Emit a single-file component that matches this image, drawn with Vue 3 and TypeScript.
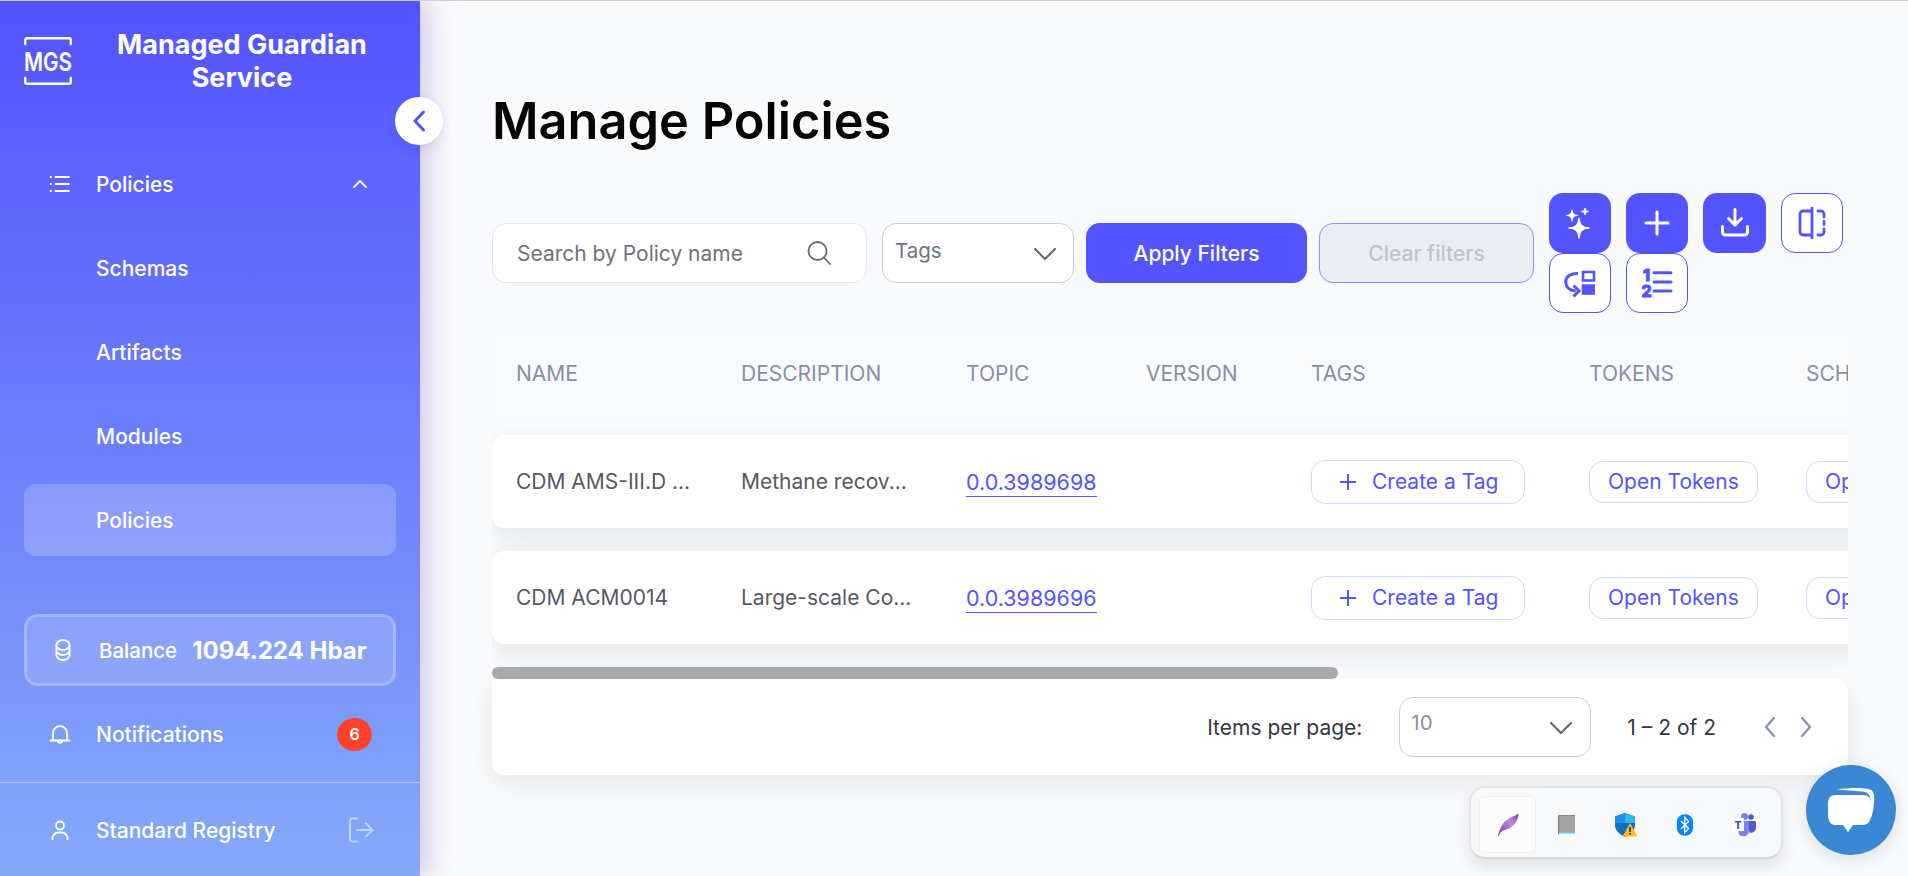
<script setup lang="ts">
interface Row { name: string; desc: string; topic: string }
const rows: Row[] = [
  { name: 'CDM AMS-III.D ...', desc: 'Methane recov...', topic: '0.0.3989698' },
  { name: 'CDM ACM0014', desc: 'Large-scale Co...', topic: '0.0.3989696' },
]
const headers: string[] = ['NAME', 'DESCRIPTION', 'TOPIC', 'VERSION', 'TAGS', 'TOKENS', 'SCHEMAS']
const subItems: string[] = ['Schemas', 'Artifacts', 'Modules']
</script>

<template>
  <div class="app">
    <aside class="sidebar">
      <header class="brand">
        <svg class="logo" viewBox="0 0 48 48" width="48" height="48" fill="none">
          <path d="M1.200 7V3.200a2 2 0 0 1 2-2h41.600a2 2 0 0 1 2 2V7M1.200 41v3.800a2 2 0 0 0 2 2h41.600a2 2 0 0 0 2-2V41" stroke="#fff" stroke-width="2.400" stroke-linecap="round"/>
          <text x="0" y="34" textLength="48" lengthAdjust="spacingAndGlyphs" fill="#fff" font-family="Inter, sans-serif" font-weight="600" font-size="26">MGS</text>
        </svg>
        <div class="brand-name">Managed Guardian Service</div>
      </header>

      <nav class="nav">
        <div class="nav-item">
          <svg class="nav-icon" viewBox="0 0 24 24" width="24" height="24" fill="none" stroke="#fff" stroke-width="1.800" stroke-linecap="round">
            <path d="M7.500 5h13.500M7.500 12h13.500M7.500 19h13.500M2.500 5h.6M2.500 12h.6M2.500 19h.6"/>
          </svg>
          <span>Policies</span>
          <svg class="caret" viewBox="0 0 16 10" width="16" height="10" fill="none" stroke="#fff" stroke-width="1.800" stroke-linecap="round" stroke-linejoin="round">
            <path d="M2 8l6-6 6 6"/>
          </svg>
        </div>
        <div v-for="item in subItems" :key="item" class="nav-item">
          <span class="nav-spacer"></span><span>{{ item }}</span>
        </div>
        <div class="nav-item active">
          <span class="nav-spacer"></span><span>Policies</span>
        </div>
      </nav>

      <div class="balance">
        <svg viewBox="0 0 24 24" width="24" height="24" fill="none" stroke="#fff" stroke-width="1.800">
          <ellipse cx="12" cy="7" rx="6.600" ry="5"/>
          <path d="M5.400 7v10c0 2.800 3 5 6.600 5s6.600-2.200 6.600-5V7M5.400 12c0 2.800 3 5 6.600 5s6.600-2.200 6.600-5"/>
        </svg>
        <span class="balance-label">Balance</span>
        <span class="balance-value">1094.224 Hbar</span>
      </div>

      <div class="nav-item notif">
        <svg class="nav-icon" viewBox="0 0 24 24" width="24" height="24" fill="none" stroke="#fff" stroke-width="1.800" stroke-linecap="round" stroke-linejoin="round">
          <path d="M2.500 18.500h19M5 18.500v-7.500a7 7 0 0 1 14 0v7.500M9.500 19a2.600 2.600 0 0 0 5 0"/>
        </svg>
        <span>Notifications</span>
        <span class="badge">6</span>
      </div>

      <footer class="user">
        <div class="nav-item">
          <svg class="nav-icon" viewBox="0 0 24 24" width="24" height="24" fill="none" stroke="#fff" stroke-width="1.800">
            <circle cx="12" cy="7.500" r="4"/>
            <path d="M4.500 22v-1.500a6 6 0 0 1 6-6h3a6 6 0 0 1 6 6V22"/>
          </svg>
          <span>Standard Registry</span>
          <svg class="logout" viewBox="0 0 26 26" width="26" height="26" fill="none" stroke="#c3d4fb" stroke-width="2" stroke-linecap="round" stroke-linejoin="round">
            <path d="M9 1.500H4a2 2 0 0 0-2 2v19a2 2 0 0 0 2 2h5M9 13h15.500M18 6.500l6.500 6.500-6.500 6.500"/>
          </svg>
        </div>
      </footer>
    </aside>

    <main class="main">
      <h1 class="title">Manage Policies</h1>

      <section class="toolbar">
        <div class="search">
          <span>Search by Policy name</span>
          <svg viewBox="0 0 26 26" width="26" height="26" fill="none" stroke="#646b75" stroke-width="1.800" stroke-linecap="round">
            <circle cx="11.500" cy="11" r="9"/><path d="M18 17.500l6 6.500"/>
          </svg>
        </div>
        <div class="select tags">
          <span>Tags</span>
          <svg viewBox="0 0 24 14" width="24" height="14" fill="none" stroke="#646b75" stroke-width="2.200" stroke-linecap="round" stroke-linejoin="round"><path d="M2 2l10 10L22 2"/></svg>
        </div>
        <button class="apply">Apply Filters</button>
        <button class="clear">Clear filters</button>

        <div class="actions">
          <button class="act solid">
            <svg viewBox="0 0 32 32" width="32" height="32" fill="#fff">
              <path d="M15 11.500Q15 21 25 21Q15 21 15 31Q15 21 5 21Q15 21 15 11.500Z" stroke="#fff" stroke-width="1.600" stroke-linejoin="round"/>
              <path d="M8 3Q8 8.500 13.500 8.500Q8 8.500 8 14Q8 8.500 2.500 8.500Q8 8.500 8 3Z" stroke="#fff" stroke-width="1.200" stroke-linejoin="round"/>
              <path d="M21 1Q21 4.500 24.500 4.500Q21 4.500 21 8Q21 4.500 17.500 4.500Q21 4.500 21 1Z" stroke="#fff" stroke-width=".9" stroke-linejoin="round"/>
            </svg>
          </button>
          <button class="act solid">
            <svg viewBox="0 0 32 32" width="32" height="32" fill="none" stroke="#fff" stroke-width="3" stroke-linecap="round"><path d="M16 5v22M5 16h22"/></svg>
          </button>
          <button class="act solid wide">
            <svg viewBox="0 0 32 32" width="32" height="32" fill="none" stroke="#fff" stroke-width="3" stroke-linecap="round" stroke-linejoin="round">
              <path d="M16 2.500V18M9.500 11.500L16 18l6.500-6.500M3.500 19.500V25a3 3 0 0 0 3 3h19a3 3 0 0 0 3-3v-5.500"/>
            </svg>
          </button>
          <button class="act outline">
            <svg viewBox="0 0 32 32" width="32" height="32" fill="none" stroke="#5454ff" stroke-width="2.800" stroke-linecap="round" stroke-linejoin="round">
              <path d="M16 4H7a3 3 0 0 0-3 3v18a3 3 0 0 0 3 3h9M16 1v30M22 4h3a3 3 0 0 1 3 3v3M28 14.500v3M28 22v3a3 3 0 0 1-3 3h-3"/>
            </svg>
          </button>
          <button class="act outline">
            <svg viewBox="0 0 32 32" width="32" height="32" fill="none" stroke="#5454ff">
              <rect x="19" y="5" width="11" height="8.500" stroke-width="2.600"/>
              <rect x="17.700" y="17.300" width="13.300" height="10.500" fill="#5454ff" stroke="none"/>
              <path d="M14 6.500C7 6 1.700 9.500 1.700 15c0 4.500 3 8.500 10 9" stroke-width="3"/>
              <path d="M9.500 18.500l5.500 5.500-5.500 5.500" stroke-width="3"/>
            </svg>
          </button>
          <button class="act outline">
            <svg viewBox="0 0 32 32" width="32" height="32" fill="none" stroke="#5454ff" stroke-width="3" stroke-linecap="round">
              <path d="M13 5.700h17M13 15h17M13 24h17"/>
              <text x="5.500" y="14" text-anchor="middle" fill="#5454ff" stroke="#5454ff" stroke-width=".9" font-family="Inter, sans-serif" font-weight="800" font-size="16">1</text>
              <text x="5.500" y="29.500" text-anchor="middle" fill="#5454ff" stroke="#5454ff" stroke-width=".9" font-family="Inter, sans-serif" font-weight="800" font-size="16">2</text>
            </svg>
          </button>
        </div>
      </section>

      <section class="table">
        <div class="grid thead">
          <div v-for="h in headers" :key="h">{{ h }}</div>
        </div>
        <div v-for="row in rows" :key="row.topic" class="grid trow">
          <div>{{ row.name }}</div>
          <div>{{ row.desc }}</div>
          <div><a class="topic">{{ row.topic }}</a></div>
          <div></div>
          <div>
            <button class="pill tag">
              <svg viewBox="0 0 16 16" width="16" height="16" fill="none" stroke="#5454ff" stroke-width="2"><path d="M8 0v16M0 8h16"/></svg>
              <span>Create a Tag</span>
            </button>
          </div>
          <div><button class="pill">Open Tokens</button></div>
          <div><button class="pill">Open Schemas</button></div>
        </div>
        <div class="scroll-track"><div class="scroll-thumb"></div></div>
      </section>

      <section class="paginator">
        <span>Items per page:</span>
        <div class="select size">
          <span>10</span>
          <svg viewBox="0 0 24 14" width="24" height="14" fill="none" stroke="#646b75" stroke-width="2.200" stroke-linecap="round" stroke-linejoin="round"><path d="M2 2l10 10L22 2"/></svg>
        </div>
        <span class="range">1 – 2 of 2</span>
        <div class="pager">
          <svg viewBox="0 0 14 22" width="14" height="22" fill="none" stroke="#8892ac" stroke-width="2.400" stroke-linecap="round" stroke-linejoin="round"><path d="M11 2L3 11l8 9"/></svg>
          <svg viewBox="0 0 14 22" width="14" height="22" fill="none" stroke="#8892ac" stroke-width="2.400" stroke-linecap="round" stroke-linejoin="round"><path d="M3 2l8 9-8 9"/></svg>
        </div>
      </section>
    </main>

    <button class="collapse" aria-label="Collapse">
      <svg viewBox="0 0 14 24" width="14" height="24" fill="none" stroke="#5454ff" stroke-width="3" stroke-linecap="round" stroke-linejoin="round"><path d="M11.500 3L3 12l8.500 9"/></svg>
    </button>

    <div class="tray">
      <div class="tray-cell first">
        <svg viewBox="0 0 22 24" width="22" height="24">
          <defs><linearGradient id="fe" x1="0" y1="1" x2="1" y2="0"><stop offset="0" stop-color="#7a35a8"/><stop offset=".6" stop-color="#b890da"/><stop offset="1" stop-color="#7d3fb0"/></linearGradient></defs>
          <path d="M1 23.500C2 18 4 12 9 7.500C13 4 18 3 21.500 .5C21.500 6 18 12 13 15C9 17 5 17 3 20.500L1.500 23.500Z" fill="url(#fe)"/>
        </svg>
      </div>
      <div class="tray-cell">
        <svg viewBox="0 0 18 20" width="18" height="20">
          <rect x="0" y="0" width="17" height="18" fill="#a3a3a3"/>
          <path d="M0 0h1v19H0z" fill="#7b7b7b"/><path d="M0 0h17v1H0z" fill="#8a8a8a"/><path d="M1 17h16v1.500H1z" fill="#74c0ec"/>
        </svg>
      </div>
      <div class="tray-cell">
        <svg viewBox="0 0 24 26" width="24" height="26">
          <path d="M11 1l10 3.500V13c0 6-5 9.500-10 12C6 22.500 1 19 1 13V4.500z" fill="#0f6cc4"/>
          <path d="M11 1l10 3.500V11H11z" fill="#31b7ec"/><path d="M11 1v10H1V4.500z" fill="#1d93dd"/>
          <path d="M16 11l7.500 13.500h-15z" fill="#fdbd13"/>
          <rect x="15.300" y="15" width="1.500" height="5" fill="#222"/><rect x="15.300" y="21" width="1.500" height="1.600" fill="#222"/>
        </svg>
      </div>
      <div class="tray-cell">
        <svg viewBox="0 0 20 26" width="18" height="24">
          <rect x="1" y="1" width="18" height="24" rx="8.500" fill="#0a84ff"/>
          <path d="M5.500 8.500L14 17l-4.300 4.500v-17L14 9l-8.500 8.500" fill="none" stroke="#fff" stroke-width="1.500"/>
        </svg>
      </div>
      <div class="tray-cell">
        <svg viewBox="0 0 26 24" width="26" height="24">
          <circle cx="19" cy="4" r="2.800" fill="#5059c9"/>
          <path d="M15 8h7.500a1.500 1.500 0 0 1 1.500 1.500V15a5 5 0 0 1-6.500 4.500z" fill="#5059c9"/>
          <circle cx="12.500" cy="3.500" r="3.500" fill="#7b83eb"/>
          <path d="M7 8h10v10a5.500 5.500 0 0 1-10.500 2z" fill="#7b83eb"/>
          <rect x="0" y="5" width="12" height="13" fill="#fff"/>
          <text x="6" y="15.500" text-anchor="middle" fill="#4b53bc" font-family="Inter, sans-serif" font-weight="800" font-size="11">T</text>
        </svg>
      </div>
    </div>

    <button class="chat" aria-label="Chat">
      <svg viewBox="0 0 90 90" width="90" height="90" fill="#fff">
        <path d="M31 24.500C45 22.500 58 22.500 64 24.500C68.500 26 68.500 32 68 38C67.700 43 66.500 49 65 53L64.500 36C64.500 30 62 27 56 26.500Z"/>
        <path d="M29 30H57C62 30 65 33 65 38V50C65 56 62 60 57 60H47L42 67L37 60H29C25 60 22 56 22 50V38C22 33 25 30 29 30Z"/>
      </svg>
    </button>
  </div>
</template>

<style>
html, body { margin: 0; overflow: hidden; }
</style>

<style scoped>
.app {
  position: relative;
  display: flex;
  width: 1908px;
  height: 876px;
  box-sizing: border-box;
  border-top: 1px solid #cfcfcf;
  background: #f9fafc;
  font-family: Inter, "Noto Sans", sans-serif;
  overflow: hidden;
}
button { font-family: inherit; cursor: pointer; }

.sidebar {
  position: relative;
  z-index: 1;
  flex: 0 0 420px;
  display: flex;
  flex-direction: column;
  color: #fff;
  background: linear-gradient(180deg, #5353ff 0%, #85aaf9 100%);
  box-shadow: 6px 0 26px rgba(90, 50, 170, 0.28);
}
.brand {
  height: 147px;
  flex: none;
  display: flex;
  align-items: flex-start;
  padding: 27px 24px 0;
  box-sizing: border-box;
}
.logo { margin-top: 9px; flex: none; }
.brand-name {
  margin-left: 32px;
  width: 276px;
  text-align: center;
  font-size: 27px;
  font-weight: 700;
  line-height: 33px;
}
.nav { display: flex; flex-direction: column; gap: 12px; margin: 0 24px; }
.nav-item {
  height: 72px;
  display: flex;
  align-items: center;
  border-radius: 12px;
  font-size: 21px;
  font-weight: 500;
  color: #fff;
}
.nav-icon { flex: none; margin-left: 24px; margin-right: 24px; }
.nav-spacer { width: 72px; flex: none; }
.caret { margin-left: auto; margin-right: 28px; }
.active { background: rgba(255, 255, 255, 0.2); }
.balance {
  margin: 58px 24px 0;
  height: 72px;
  box-sizing: border-box;
  display: flex;
  align-items: center;
  padding-left: 24px;
  border: 3px solid rgba(255, 255, 255, 0.2);
  border-radius: 14px;
  background: rgba(255, 255, 255, 0.15);
}
.balance-label { margin-left: 24px; font-size: 20.500px; font-weight: 500; }
.balance-value { margin-left: 15px; font-size: 24px; font-weight: 700; white-space: nowrap; }
.notif { margin: 12px 24px 12px; }
.badge {
  margin-left: auto;
  margin-right: 24px;
  width: 35px;
  height: 33px;
  border-radius: 50%;
  background: #ff4229;
  display: flex;
  align-items: center;
  justify-content: center;
  font-size: 16px;
  font-weight: 600;
}
.user {
  border-top: 1px solid rgba(255, 255, 255, 0.35);
  flex: 1;
  padding: 11px 24px 0;
}
.logout { margin-left: auto; margin-right: 22px; }

.main {
  flex: 1;
  min-width: 0;
  padding: 0 60px 0 72px;
  display: flex;
  flex-direction: column;
}
.title {
  margin: 88px 0 0;
  height: 64px;
  line-height: 64px;
  font-size: 50.500px;
  font-weight: 600;
  color: #050505;
}
.toolbar {
  margin-top: 40px;
  height: 120px;
  display: flex;
  align-items: center;
  flex: none;
}
.toolbar > * { flex: none; }
.search {
  width: 375px;
  height: 60px;
  box-sizing: border-box;
  display: flex;
  align-items: center;
  justify-content: space-between;
  padding: 0 34px 0 24px;
  background: #fff;
  border: 1px solid #e3e7ef;
  border-radius: 14px;
  font-size: 21px;
  color: #6d747e;
}
.select {
  box-sizing: border-box;
  height: 60px;
  background: #fff;
  border: 1px solid #c9ced8;
  border-radius: 14px;
  display: flex;
  justify-content: space-between;
  color: #6d747e;
  font-size: 20.500px;
}
.select span { margin-top: 14px; }
.select svg { margin-top: 23px; }
.tags { width: 192px; margin-left: 15px; padding: 0 16px 0 12px; }
.apply, .clear {
  height: 60px;
  box-sizing: border-box;
  border-radius: 14px;
  font-size: 21px;
  font-weight: 500;
}
.apply { width: 221px; margin-left: 12px; background: #5454ff; border: 0; color: #fff; }
.clear { width: 215px; margin-left: 12px; background: #ebedf3; border: 1px solid #8f8fff; color: #bec3d1; }
.actions {
  margin-left: 15px;
  width: 299px;
  display: flex;
  flex-wrap: wrap;
  column-gap: 15px;
}
.act {
  width: 62px;
  height: 60px;
  box-sizing: border-box;
  border-radius: 14px;
  padding: 0;
  display: flex;
  align-items: center;
  justify-content: center;
}
.wide { width: 63px; }
.solid { background: #5454ff; border: 0; }
.outline { background: #fff; border: 1px solid #5454ff; }

.table {
  margin-top: 22px;
  height: 344px;
  flex: none;
  overflow: hidden;
  position: relative;
  display: flex;
  flex-direction: column;
}
.grid {
  display: grid;
  grid-template-columns: 225px 225px 180px 165px 278px 217px 300px;
  padding-left: 24px;
  width: 1460px;
  flex: none;
  align-items: center;
}
.thead {
  height: 100px;
  padding-bottom: 24px;
  box-sizing: border-box;
  font-size: 21px;
  color: #8690a9;
  background: #fafbfd;
}
.trow {
  height: 93px;
  background: #fff;
  border-radius: 12px 0 0 12px;
  box-shadow: 0 8px 30px rgba(0, 0, 0, 0.09);
  font-size: 21px;
  color: #555a63;
  margin-bottom: 23px;
}
.topic { color: #5454ff; border-bottom: 1px solid #5454ff; padding-bottom: 1px; font-size: 21.500px; }
.pill {
  height: 42px;
  box-sizing: border-box;
  padding: 0 18px;
  background: #fff;
  border: 1px solid #cfdbff;
  border-radius: 14px;
  color: #5454ff;
  font-size: 21px;
  font-weight: 400;
  white-space: nowrap;
}
.tag {
  height: 44px;
  width: 214px;
  display: flex;
  align-items: center;
  gap: 16px;
  padding-left: 28px;
}
.scroll-track { position: absolute; left: 0; right: 0; bottom: 0; height: 12px; background: #f7f8fa; }
.scroll-thumb { width: 846px; height: 12px; border-radius: 6px; background: #a9aaad; }

.paginator {
  height: 96px;
  flex: none;
  display: flex;
  align-items: center;
  justify-content: flex-end;
  background: #fff;
  border-radius: 0 12px 12px 12px;
  box-shadow: 0 8px 30px rgba(0, 0, 0, 0.08);
  font-size: 21px;
  color: #33383f;
  padding-right: 35px;
}
.size { width: 192px; margin-left: 37px; padding: 0 17px 0 11px; color: #8a929f; }
.size span { margin-top: 12px; }
.range { margin-left: 36px; }
.pager { margin-left: 47px; display: flex; gap: 22px; }

.collapse {
  position: absolute;
  z-index: 2;
  left: 395px;
  top: 96px;
  width: 48px;
  height: 48px;
  padding: 0;
  border: 0;
  border-radius: 50%;
  background: #fff;
  box-shadow: 0 4px 12px rgba(60, 40, 140, 0.12);
  display: flex;
  align-items: center;
  justify-content: center;
}
.tray {
  position: absolute;
  z-index: 3;
  left: 1469px;
  top: 785px;
  width: 314px;
  height: 73px;
  box-sizing: border-box;
  padding: 8px;
  display: flex;
  justify-content: space-between;
  background: #f7f8fa;
  border: 2px solid #e3e4e6;
  border-bottom-color: #d5d6d8;
  border-radius: 16px;
  box-shadow: 0 8px 16px rgba(0, 0, 0, 0.1);
}
.tray-cell {
  width: 57px;
  height: 57px;
  border-radius: 5px;
  display: flex;
  align-items: center;
  justify-content: center;
}
.first { background: #fbfbfc; border: 1px solid #eeeff1; box-sizing: border-box; }
.chat {
  position: absolute;
  z-index: 3;
  left: 1806px;
  top: 764px;
  width: 90px;
  height: 90px;
  padding: 0;
  border: 0;
  border-radius: 50%;
  background: #3a88d4;
  box-shadow: 0 4px 18px rgba(0, 0, 0, 0.12);
}
</style>
